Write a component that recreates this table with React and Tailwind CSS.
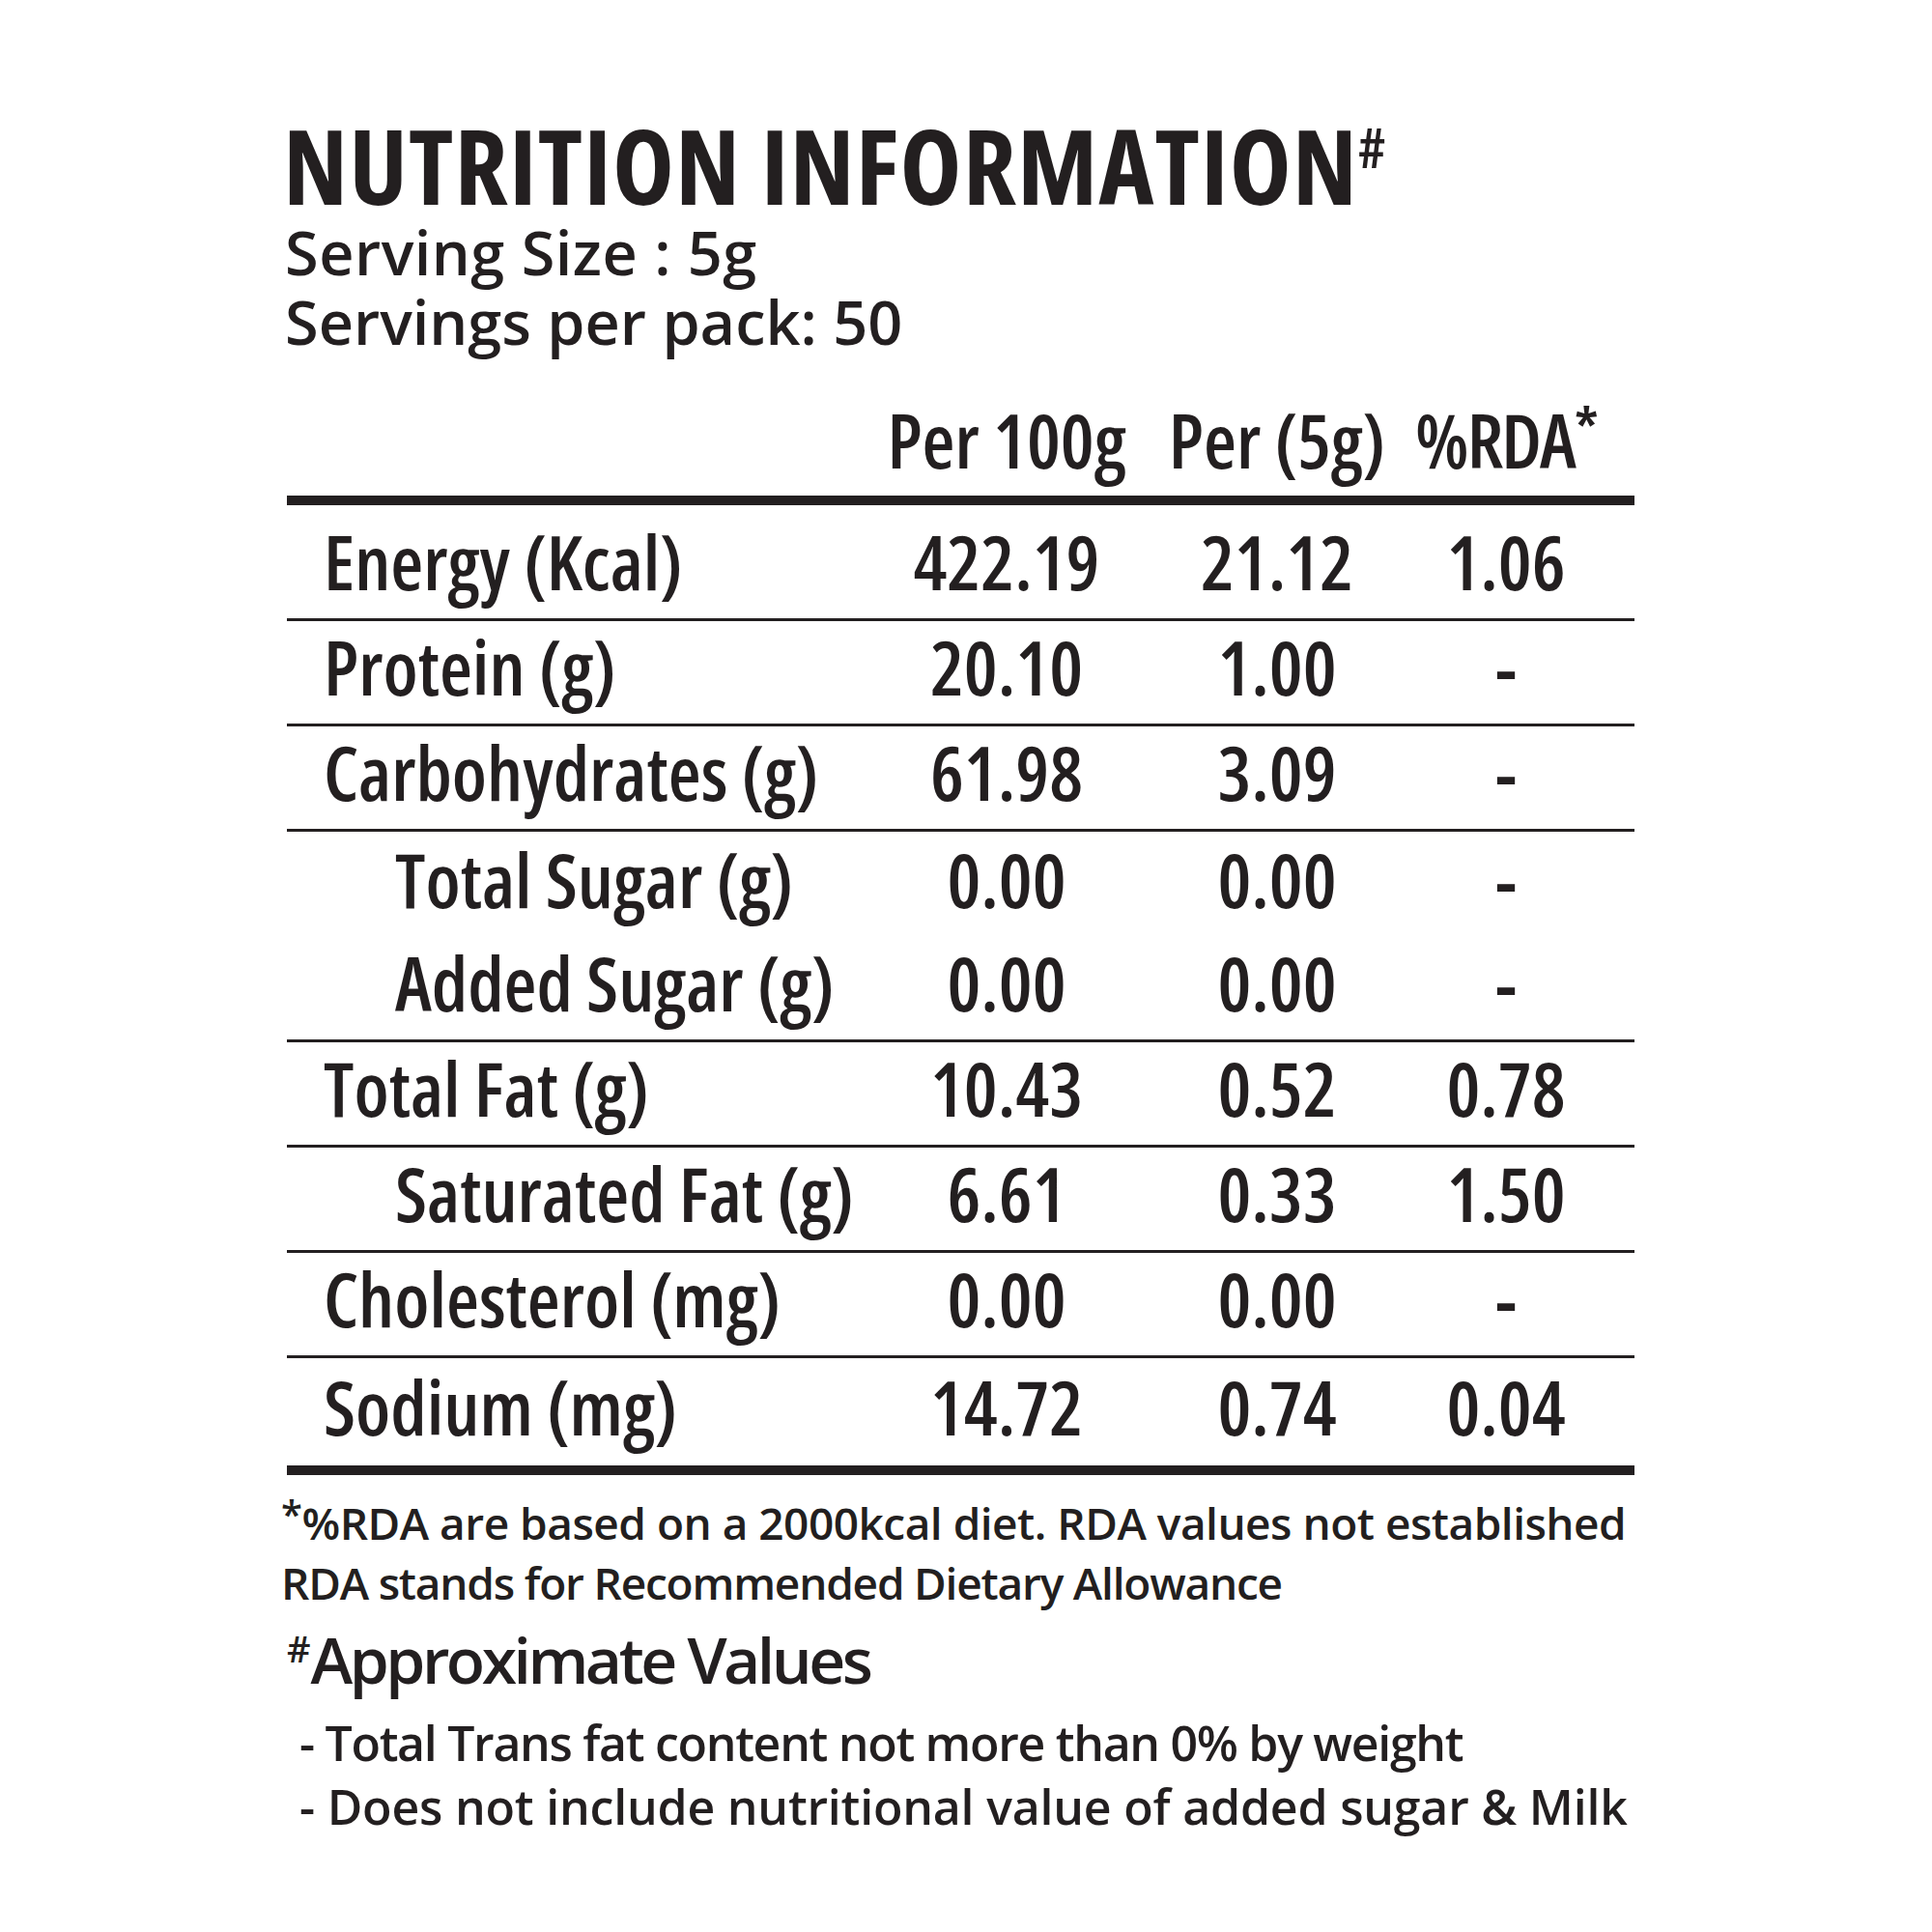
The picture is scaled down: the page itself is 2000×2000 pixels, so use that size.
const rows = [
  { label: 'Energy (Kcal)', a: '422.19', b: '21.12', c: '1.06', cls: 'h-[120px] pt-[11px] pb-[12px] border-b-[3px]' },
  { label: 'Protein (g)', a: '20.10', b: '1.00', c: '-', cls: 'h-[109px] pb-[12px] border-b-[3px]' },
  { label: 'Carbohydrates (g)', a: '61.98', b: '3.09', c: '-', cls: 'h-[109px] pb-[12px] border-b-[3px]' },
  { label: 'Total Sugar (g)', a: '0.00', b: '0.00', c: '-', cls: 'h-[109px] pb-[12px]', sub: true },
  { label: 'Added Sugar (g)', a: '0.00', b: '0.00', c: '-', cls: 'h-[109px] pb-[12px] border-b-[3px]', sub: true },
  { label: 'Total Fat (g)', a: '10.43', b: '0.52', c: '0.78', cls: 'h-[109px] pb-[12px] border-b-[3px]' },
  { label: 'Saturated Fat (g)', a: '6.61', b: '0.33', c: '1.50', cls: 'h-[109px] pb-[12px] border-b-[3px]', sub: true },
  { label: 'Cholesterol (mg)', a: '0.00', b: '0.00', c: '-', cls: 'h-[109px] pb-[12px] border-b-[3px]' },
  { label: 'Sodium (mg)', a: '14.72', b: '0.74', c: '0.04', cls: 'h-[111px] pb-[12px]' },
];

function Row({ label, a, b, c, cls, sub }) {
  return (
    <div className={`flex items-center border-[#231f20] ${cls}`}>
      <div className={`w-[635px] whitespace-nowrap ${sub ? 'pl-[112px]' : 'pl-[38px]'}`}>{label}</div>
      <div className="w-[220px] flex justify-center whitespace-nowrap">{a}</div>
      <div className="w-[340px] flex justify-center whitespace-nowrap">{b}</div>
      <div className="w-[134px] flex justify-center whitespace-nowrap">{c}</div>
    </div>
  );
}

export default function App() {
  return (
    <div className="w-[2000px] h-[2000px] bg-white text-[#231f20] font-['Open_Sans',sans-serif]">
      <div className="ml-[297px] w-[1395px] pt-[117px] flex flex-col">
        <h1 className="text-[108px] leading-[108px] font-bold font-stretch-[75%] tracking-[1.1px] whitespace-nowrap -ml-[4px]">
          NUTRITION INFORMATION
          <span className="relative top-[6px] align-top text-[58px] leading-none font-semibold">#</span>
        </h1>
        <div className="text-[63px] leading-[72px] font-semibold tracking-[0.5px] whitespace-nowrap -ml-[2px]">
          <p>Serving Size : 5g</p>
          <p className="tracking-normal">Servings per pack: 50</p>
        </div>

        <div className="flex items-center h-[144px] pt-[28px] text-[78px] font-semibold font-stretch-[75%]">
          <div className="w-[635px]" />
          <div className="w-[220px] flex justify-center whitespace-nowrap">Per 100g</div>
          <div className="w-[340px] flex justify-center whitespace-nowrap">Per (5g)</div>
          <div className="w-[134px] flex justify-center whitespace-nowrap tracking-[-2px]">
            %RDA<span className="text-[60px]">*</span>
          </div>
        </div>

        <div className="h-[10px] bg-[#231f20]" />
        <div className="text-[78px] leading-none font-semibold font-stretch-[75%]">
          {rows.map((r) => (
            <Row key={r.label} {...r} />
          ))}
        </div>
        <div className="h-[10px] bg-[#231f20]" />

        <div className="mt-[18px] -ml-[6px] text-[46px] leading-[62px] font-semibold whitespace-nowrap">
          <p className="tracking-[-0.5px]">
            <span className="relative top-[2px] align-top text-[40px] leading-none">*</span>%RDA are based on a 2000kcal diet. RDA values not established
          </p>
          <p className="tracking-[-1.2px]">RDA stands for Recommended Dietary Allowance</p>
        </div>

        <p className="mt-[8px] text-[66px] leading-[80px] font-semibold tracking-[-3.5px] whitespace-nowrap">
          <span className="relative top-[10px] align-top text-[38px] leading-none tracking-normal">#</span>Approximate Values
        </p>

        <div className="mt-[14px] pl-[13px] text-[50px] leading-[66px] font-semibold whitespace-nowrap">
          <p className="tracking-[-1.3px]">- Total Trans fat content not more than 0% by weight</p>
          <p className="tracking-[-0.2px]">- Does not include nutritional value of added sugar &amp; Milk</p>
        </div>
      </div>
    </div>
  );
}
